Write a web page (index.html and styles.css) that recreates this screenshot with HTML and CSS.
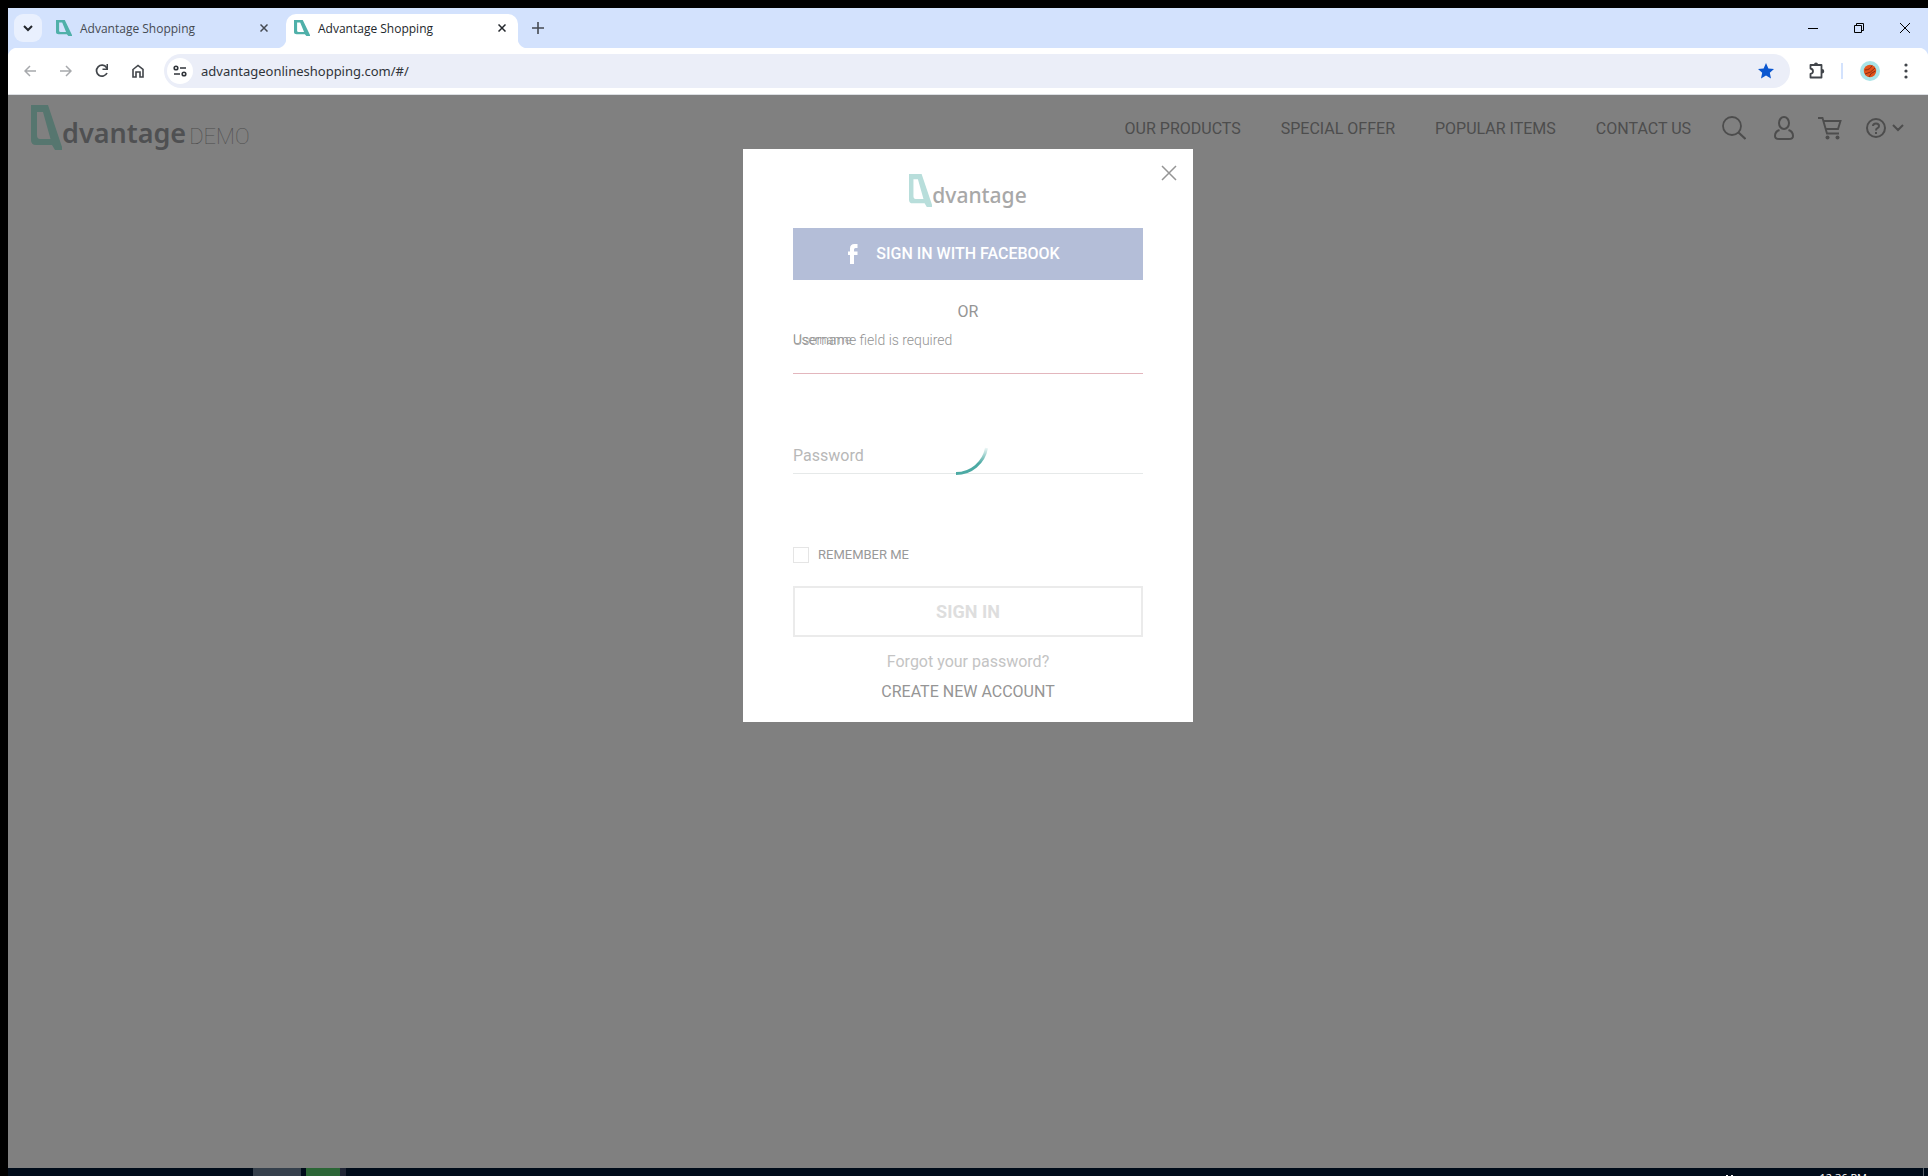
FILE: index.html
```html
<!DOCTYPE html>
<html lang="en">
<head>
<meta charset="utf-8">
<title>Advantage Shopping</title>
<link rel="stylesheet" href="styles.css">
</head>
<body>
<svg class="defs" aria-hidden="true">
  <symbol id="mark" viewBox="0 0 31 45" preserveAspectRatio="none"><path fill="currentColor" fill-rule="evenodd" d="M0 0H17L32 45H24L21 40H5Q0 40 0 35ZM6 7V30Q6 34 9 34H19.500L12 7Z"/></symbol>
  <symbol id="x" viewBox="0 0 16 16"><path fill="none" stroke="currentColor" d="M1 1 15 15M15 1 1 15"/></symbol>
</svg>
<div class="window">
  <div class="tabstrip">
    <button class="tab-search" aria-label="Search tabs"><svg width="10" height="8" viewBox="0 0 10 8"><path d="M1 2 5 6 9 2" fill="none" stroke="currentColor" stroke-width="2"/></svg></button>
    <div class="tab"><svg class="favicon"><use href="#mark"/></svg><span class="tab-title">Advantage Shopping</span><button class="tab-close" aria-label="Close tab"><svg><use href="#x"/></svg></button></div>
    <div class="tab active"><svg class="favicon"><use href="#mark"/></svg><span class="tab-title">Advantage Shopping</span><button class="tab-close" aria-label="Close tab"><svg><use href="#x"/></svg></button></div>
    <button class="new-tab" aria-label="New tab"><svg width="12" height="12" viewBox="0 0 12 12"><path d="M6 0V12M0 6H12" stroke="currentColor" stroke-width="1.6"/></svg></button>
    <div class="win-controls">
      <button aria-label="Minimize"><svg width="10" height="10" viewBox="0 0 10 10"><path d="M0 5.5H10" stroke="currentColor"/></svg></button>
      <button aria-label="Restore"><svg width="10" height="10" viewBox="0 0 10 10"><path d="M.5 2.5H7.5V9.5H.5ZM2.5 2.5V.5H9.5V7.5H7.5" fill="none" stroke="currentColor"/></svg></button>
      <button aria-label="Close"><svg width="10" height="10" viewBox="0 0 10 10"><path d="M0 0 10 10M10 0 0 10" stroke="currentColor"/></svg></button>
    </div>
  </div>
  <div class="toolbar">
    <div class="tool-buttons">
      <button class="dim" aria-label="Back"><svg width="12" height="12" viewBox="0 0 12 12"><path d="M12 6H1M6 1 1 6 6 11" fill="none" stroke="currentColor" stroke-width="1.5"/></svg></button>
      <button class="dim" aria-label="Forward"><svg width="12" height="12" viewBox="0 0 12 12"><path d="M0 6H11M6 1 11 6 6 11" fill="none" stroke="currentColor" stroke-width="1.5"/></svg></button>
      <button aria-label="Reload"><svg width="14" height="14" viewBox="0 0 14 14"><path d="M12 9A5.5 5.5 0 1 1 11.5 3.5L12.5 5" fill="none" stroke="currentColor" stroke-width="1.7"/><path d="M13 0V6H7.500V4.500H11.500V0Z" fill="currentColor"/></svg></button>
      <button aria-label="Home"><svg width="12" height="14" viewBox="0 0 12 14"><path d="M1 5.500 6 1.500 11 5.500V13H8V8H4V13H1Z" fill="none" stroke="currentColor" stroke-width="1.600"/></svg></button>
    </div>
    <div class="omnibox">
      <button class="site-info" aria-label="Site information"><svg width="14" height="12" viewBox="0 0 14 12"><g fill="none" stroke="currentColor" stroke-width="1.6"><circle cx="3" cy="3" r="1.800"/><path d="M7 3H13M1 9H7"/><circle cx="11" cy="9" r="1.800"/></g></svg></button>
      <input class="url" type="text" aria-label="Address" value="advantageonlineshopping.com/#/">
      <button class="star" aria-label="Bookmark"><svg width="16" height="16" viewBox="0 0 16 16"><path fill="currentColor" d="M8 0 10.400 5.400 16 6 11.800 9.800 13 15.500 8 12.500 3 15.500 4.200 9.800 0 6 5.600 5.400Z"/></svg></button>
    </div>
    <button class="ext" aria-label="Extensions"><svg width="18" height="18" viewBox="0 0 18 18"><path d="M2.500 3H13.500V15.500H2.500V12Q5 11.500 5 9.300 5 7 2.500 6.500Z" fill="none" stroke="currentColor" stroke-width="1.800" stroke-linejoin="round"/><path d="M6 2.500A2 2 0 0 1 10 2.500ZM14 7A2 2 0 0 1 14 11.500Z" fill="currentColor"/></svg></button>
    <span class="divider"></span>
    <button class="avatar" aria-label="Profile"><svg width="20" height="20" viewBox="0 0 20 20"><circle cx="10" cy="10" r="10" fill="#a9e4e8"/><circle cx="10" cy="10" r="6.200" fill="#e2521b"/><path d="M5 9Q10 9 12 4.500M5 13Q11 12 15 7M9 16Q10 12 15.500 10" fill="none" stroke="#8a2f12"/></svg></button>
    <button class="menu" aria-label="Menu"><svg width="4" height="16" viewBox="0 0 4 16"><g fill="currentColor"><circle cx="2" cy="2" r="1.600"/><circle cx="2" cy="8" r="1.600"/><circle cx="2" cy="14" r="1.600"/></g></svg></button>
  </div>
  <div class="page">
    <header class="site-header">
      <a class="brand" href="#"><svg class="brand-mark"><use href="#mark"/></svg><span class="brand-name">dvantage</span><span class="brand-demo">DEMO</span></a>
      <nav class="nav">
        <a href="#">OUR PRODUCTS</a><a href="#">SPECIAL OFFER</a><a href="#">POPULAR ITEMS</a><a href="#">CONTACT US</a>
      </nav>
      <div class="header-icons">
        <button aria-label="Search"><svg width="24" height="24" viewBox="0 0 24 24"><circle cx="10" cy="10" r="9" fill="none" stroke="currentColor" stroke-width="1.800"/><path d="M16.500 16.500 23.500 23" stroke="currentColor" stroke-width="2.200"/></svg></button>
        <button aria-label="Account"><svg width="20" height="24" viewBox="0 0 20 24"><g fill="none" stroke="currentColor" stroke-width="2"><ellipse cx="10" cy="7" rx="5" ry="6"/><path d="M5.500 14Q1 15.500 1 20 1 23 5 23H15Q19 23 19 20 19 15.500 14.500 14"/></g></svg></button>
        <button aria-label="Cart"><svg width="24" height="24" viewBox="0 0 24 24"><path d="M0 2H4.500L9 17.500H21M6 5H22.500L20 13H8" fill="none" stroke="currentColor" stroke-width="1.900"/><circle cx="9.500" cy="21.500" r="2" fill="currentColor"/><circle cx="19.500" cy="21.500" r="2" fill="currentColor"/></svg></button>
        <button aria-label="Help"><svg width="38" height="20" viewBox="0 0 38 20"><g fill="none" stroke="currentColor" stroke-width="2"><circle cx="10" cy="10" r="9"/><path d="M7 8Q7 5.500 10 5.500T13 8Q13 9.500 11.500 10.200 10 11 10 12.500M10 14V16M27 7 32 12 37 7"/></g></svg></button>
      </div>
    </header>
    <div class="overlay">
      <form class="modal" novalidate>
        <button type="button" class="modal-close" aria-label="Close dialog"><svg><use href="#x"/></svg></button>
        <div class="modal-logo"><svg class="modal-mark"><use href="#mark"/></svg><span>dvantage</span></div>
        <button type="button" class="facebook"><svg width="10" height="20" viewBox="0 0 10 20"><path fill="currentColor" d="M9.500 0V4H7.500Q6 4 6 5.500V7.500H9.500V11H6V20H2V11H0V7.500H2V4.500Q2 0 6.500 0Z"/></svg><span>SIGN IN WITH FACEBOOK</span></button>
        <div class="or">OR</div>
        <div class="field invalid">
          <label for="username">Username</label>
          <span class="error">Username field is required</span>
          <input id="username" type="text">
        </div>
        <div class="field">
          <input id="password" type="password" placeholder="Password" aria-label="Password">
        </div>
        <label class="remember"><input type="checkbox">REMEMBER ME</label>
        <button type="button" class="sign-in" disabled>SIGN IN</button>
        <a class="forgot" href="#">Forgot your password?</a>
        <a class="create" href="#">CREATE NEW ACCOUNT</a>
        <svg class="spinner" viewBox="0 0 66 66"><defs><linearGradient id="fade" x1="0" y1="1" x2="0" y2="0"><stop offset=".4" stop-color="#4caaa4"/><stop offset="1" stop-color="#4caaa4" stop-opacity=".1"/></linearGradient></defs><path d="M33 64.500A31 31 0 0 0 63.500 39" fill="none" stroke="url(#fade)" stroke-width="3"/></svg>
      </form>
    </div>
  </div>
  <div class="taskbar">
    <span class="task gray"></span><span class="task green"></span><span class="task edge"></span>
    <svg class="tray" width="8" height="2" viewBox="0 0 8 2"><path d="M0 1H2V2H0ZM5 1H7V2H5Z" fill="currentColor"/></svg>
    <span class="clock">12:36 PM</span>
    <span class="show-desktop"></span>
  </div>
</div>
</body>
</html>
```
FILE: styles.css
```css
* { box-sizing: border-box; }
body { margin: 0; background: #000; font-family: Roboto, "Liberation Sans", sans-serif; }
button { border: 0; background: none; padding: 0; margin: 0; font: inherit; color: inherit; display: flex; align-items: center; justify-content: center; }
a { color: inherit; text-decoration: none; }
svg { display: block; flex: none; }
.defs { position: absolute; width: 0; height: 0; }
.window { display: flex; flex-direction: column; height: 100vh; padding: 8px 0 0 8px; }

.tabstrip { display: flex; align-items: flex-end; height: 40px; padding-left: 6px; background: #d3e2fd; color: #23272c; flex: none; }
.tab-search { width: 28px; height: 28px; margin-bottom: 6px; border-radius: 9px; background: #e9f0fe; }
.tab { display: flex; align-items: center; width: 232px; height: 34px; margin-left: 6px; padding: 0 10px 6px 8px; font: 12px/16px "Open Sans", sans-serif; color: #454a52; }
.tab.active { position: relative; background: #fff; color: #23272c; border-radius: 10px 10px 0 0; }
.tab.active::before, .tab.active::after { content: ""; position: absolute; bottom: 0; width: 10px; height: 10px; }
.tab.active::before { right: 100%; background: radial-gradient(circle at 0 0, transparent 10px, #fff 11px); }
.tab.active::after { left: 100%; background: radial-gradient(circle at 100% 0, transparent 10px, #fff 11px); }
.favicon { width: 16px; height: 16px; color: #4fb0a9; }
.tab-title { flex: 1; margin-left: 8px; padding-top: 2px; }
.tab-close { width: 12px; height: 16px; }
.tab-close svg { width: 8px; height: 8px; stroke-width: 3; }
.new-tab { width: 28px; height: 28px; margin: 0 0 6px 6px; color: #454a52; }
.win-controls { display: flex; margin-left: auto; align-self: stretch; color: #000; }
.win-controls button { width: 46px; }

.toolbar { display: flex; align-items: center; height: 47px; flex: none; border-bottom: 1px solid #dcdfe3; padding: 0 20px 0 4px; color: #41454a; background: radial-gradient(circle at 10px 10px, #fff 10px, #d3e2fd 11px) left top / 10px 10px no-repeat, radial-gradient(circle at 0 10px, #fff 10px, #d3e2fd 11px) right top / 10px 10px no-repeat, #fff; }
.tool-buttons { display: flex; }
.tool-buttons button { width: 36px; height: 36px; }
.tool-buttons .dim { color: #a7a9ac; }
.omnibox { display: flex; align-items: center; flex: 1; height: 34px; margin-left: 8px; padding: 0 16px 0 3px; border-radius: 17px; background: #ebeef8; }
.site-info { width: 26px; height: 26px; border-radius: 50%; background: #fff; color: #30343a; }
.url { flex: 1; min-width: 0; margin-left: 8px; padding: 0; border: 0; background: none; font: 13px/18px "Noto Sans", sans-serif; color: #30343a; outline: none; }
.star { color: #0b57d0; }
.ext { margin-left: 18px; }
.divider { width: 2px; height: 16px; margin: 0 17px 0 15px; background: #d3e2fd; }
.menu { margin-left: 24px; }

.page { position: relative; flex: 1; min-height: 0; background: #808080; color: #4d4d4d; }
.site-header { display: flex; align-items: center; height: 66px; padding: 0 24px 0 23px; }
.brand { display: flex; align-items: flex-end; height: 46px; }
.brand-mark { width: 31px; height: 45px; margin-bottom: 1px; color: #56766f; }
.brand-name { font: 600 27px/32px "Noto Sans", sans-serif; margin: 0 3px 2px 0; color: #4f5052; }
.brand-demo { font-size: 22px; line-height: 26px; font-weight: 100; margin-bottom: 1px; }
.nav { display: flex; gap: 40px; margin-left: auto; font-size: 16px; line-height: 20px; padding-top: 1px; }
.header-icons { display: flex; align-items: center; margin-left: 31px; }
.header-icons button + button { margin-left: 24px; }
.header-icons button:nth-child(2) { margin-left: 28px; }

.overlay { position: absolute; inset: 0; display: flex; justify-content: center; align-items: flex-start; padding-top: 54px; }
.modal { position: relative; display: flex; flex-direction: column; width: 450px; padding: 24px 50px 20px; background: #fff; font-size: 16px; line-height: 20px; color: #959595; }
.modal-close { position: absolute; top: 16px; right: 16px; color: #959595; }
.modal-close svg { width: 16px; height: 16px; stroke-width: 1.5; }
.modal-logo { display: flex; align-items: flex-end; justify-content: center; height: 35px; font: 500 21px/26px "Noto Sans", sans-serif; color: #a8a8a8; }
.modal-mark { width: 23px; height: 33px; margin-bottom: 1px; color: #b8dedb; }
.facebook { height: 52px; margin-top: 20px; gap: 18px; padding-right: 28px; background: #b4bed8; color: #fff; font-weight: 500; }
.or { margin-top: 22px; text-align: center; }
.field { position: relative; height: 100px; }
.field input { display: block; width: 100%; height: 52px; padding: 20px 0 4px; border: 0; border-bottom: 1px solid #e6e9e9; outline: none; background: none; font: 16px/20px Roboto, sans-serif; color: #959595; }
.field input::placeholder { color: #b8b8b8; opacity: 1; }
.field.invalid input { border-color: #e3b6bd; }
.field label, .error { position: absolute; left: 0; top: 8px; font-size: 14px; line-height: 20px; font-weight: 300; color: #949494; }
.field label { font-size: 13px; }
.remember { display: flex; align-items: center; gap: 9px; height: 16px; margin-top: 25px; font-size: 13px; line-height: 16px; color: #999; }
.remember input { appearance: none; width: 16px; height: 16px; margin: 0; border: 1px solid #e5e5e5; }
.sign-in { height: 51px; margin-top: 23px; border: 2px solid #ebebeb; font-size: 18px; font-weight: 700; color: #dedede; }
.forgot { margin-top: 15px; text-align: center; color: #c4c4c4; }
.create { margin-top: 10px; text-align: center; }
.spinner { position: absolute; left: 180px; top: 260px; width: 66px; height: 66px; }

.taskbar { display: flex; height: 8px; flex: none; overflow: hidden; background: #000c1a; color: #fff; padding-left: 245px; }
.task { height: 8px; }
.gray { width: 48px; background: #35404c; }
.green { width: 34px; margin-left: 5px; background: #2b6636; }
.edge { width: 6px; background: #202636; }
.tray { margin: 6px 0 0 auto; }
.clock { margin: 2px 0 0 86px; font: 11px/16px "Open Sans", sans-serif; white-space: nowrap; }
.show-desktop { width: 1px; margin: 0 4px 0 56px; background: #59616b; }
```
